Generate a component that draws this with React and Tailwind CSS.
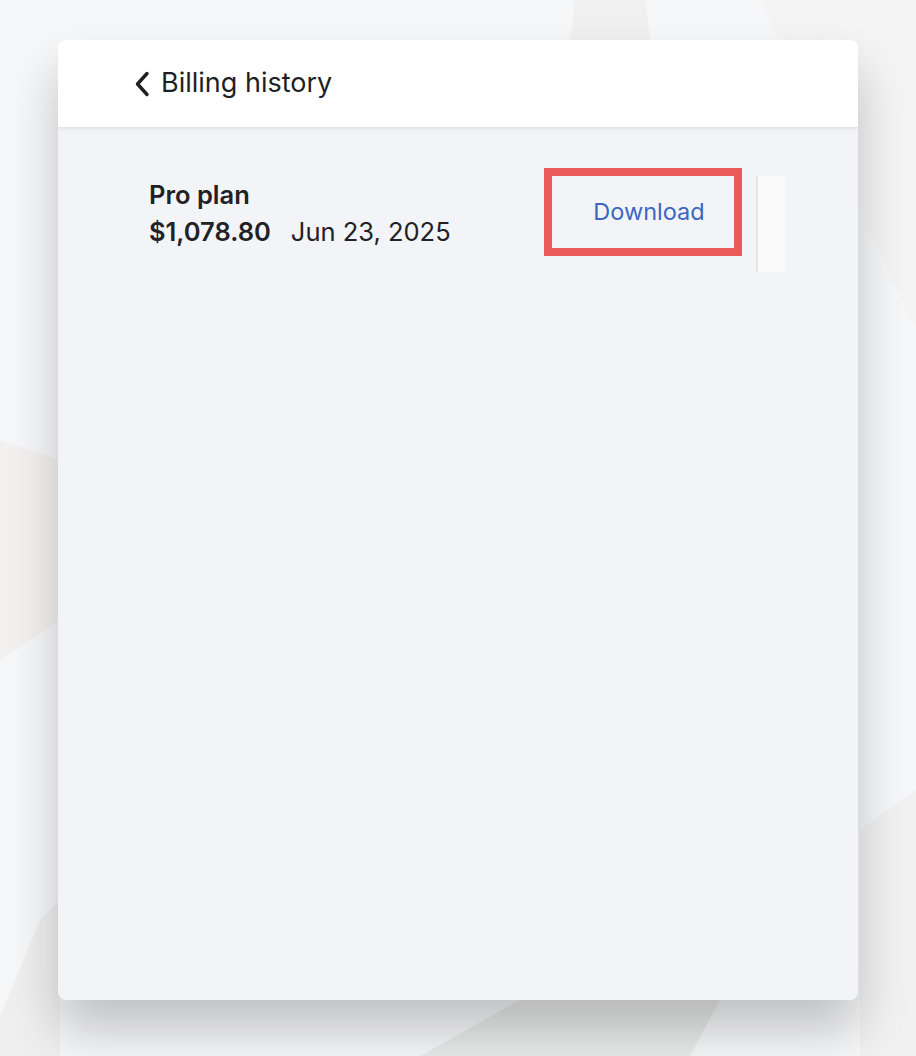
import React from "react";

const ChevronLeft = () => (
  <svg width="16" height="26" viewBox="0 0 16 26" fill="none" className="shrink-0">
    <path d="M13 2.5L3.5 13L13 23.5" stroke="#1f1f24" strokeWidth="3.4" strokeLinecap="round" strokeLinejoin="round" />
  </svg>
);

const Backdrop = () => (
  <svg className="absolute inset-0 h-full w-full" viewBox="0 0 916 1056" preserveAspectRatio="none">
    <polygon points="575,0 645,0 660,120 560,130" fill="#f0f0f0" />
    <polygon points="760,0 916,0 916,330" fill="#f4f4f5" />
    <polygon points="0,440 60,460 60,620 0,660" fill="#f2f1f0" />
    <polygon points="0,1017 40,920 60,900 60,1056 0,1056" fill="#efefef" />
    <polygon points="420,1056 520,1000 720,1000 690,1056" fill="#e9eaea" />
    <polygon points="860,830 916,790 916,1056 860,1056" fill="#f1f1f1" />
  </svg>
);

export default function App() {
  return (
    <div className="relative min-h-[1056px] overflow-hidden bg-[#f6f7f9] px-[58px] pt-[40px] pb-[56px]" style={{ fontFamily: "Inter, 'Noto Sans', sans-serif" }}>
      <Backdrop />
      <div className="relative flex h-[960px] flex-col overflow-hidden rounded-lg bg-[#f3f4f8] shadow-[0_30px_50px_rgba(0,0,0,0.22)]">
        <div className="flex h-[88px] items-center gap-[11px] bg-white pl-[76px] shadow-[0_1px_3px_rgba(0,0,0,0.08)] border-b border-[#e4e5e9]">
          <ChevronLeft />
          <h1 className="text-[27px] font-normal text-[#1f1f24]">Billing history</h1>
        </div>

        <div className="flex items-start pl-[91px] pr-[73px] pt-[40px]">
          <div className="flex-1 pt-[8px] text-[#222226]">
            <p className="text-[25.5px] font-semibold leading-[37px]">Pro plan</p>
            <p className="text-[25.5px] leading-[37px]">
              <span className="font-semibold">$1,078.80</span>
              <span className="ml-[20px]">Jun 23, 2025</span>
            </p>
          </div>
          <button className="flex h-[88px] w-[198px] items-center justify-center border-[8px] border-[#ea5c5c] pl-[12px] text-[23.5px] text-[#3b67c3]">
            Download
          </button>
          <div className="ml-[14px] mt-[8px] h-[96px] w-[29px] border-l-2 border-[#e7e7e9] bg-[#fafafa]" />
        </div>
      </div>
    </div>
  );
}
